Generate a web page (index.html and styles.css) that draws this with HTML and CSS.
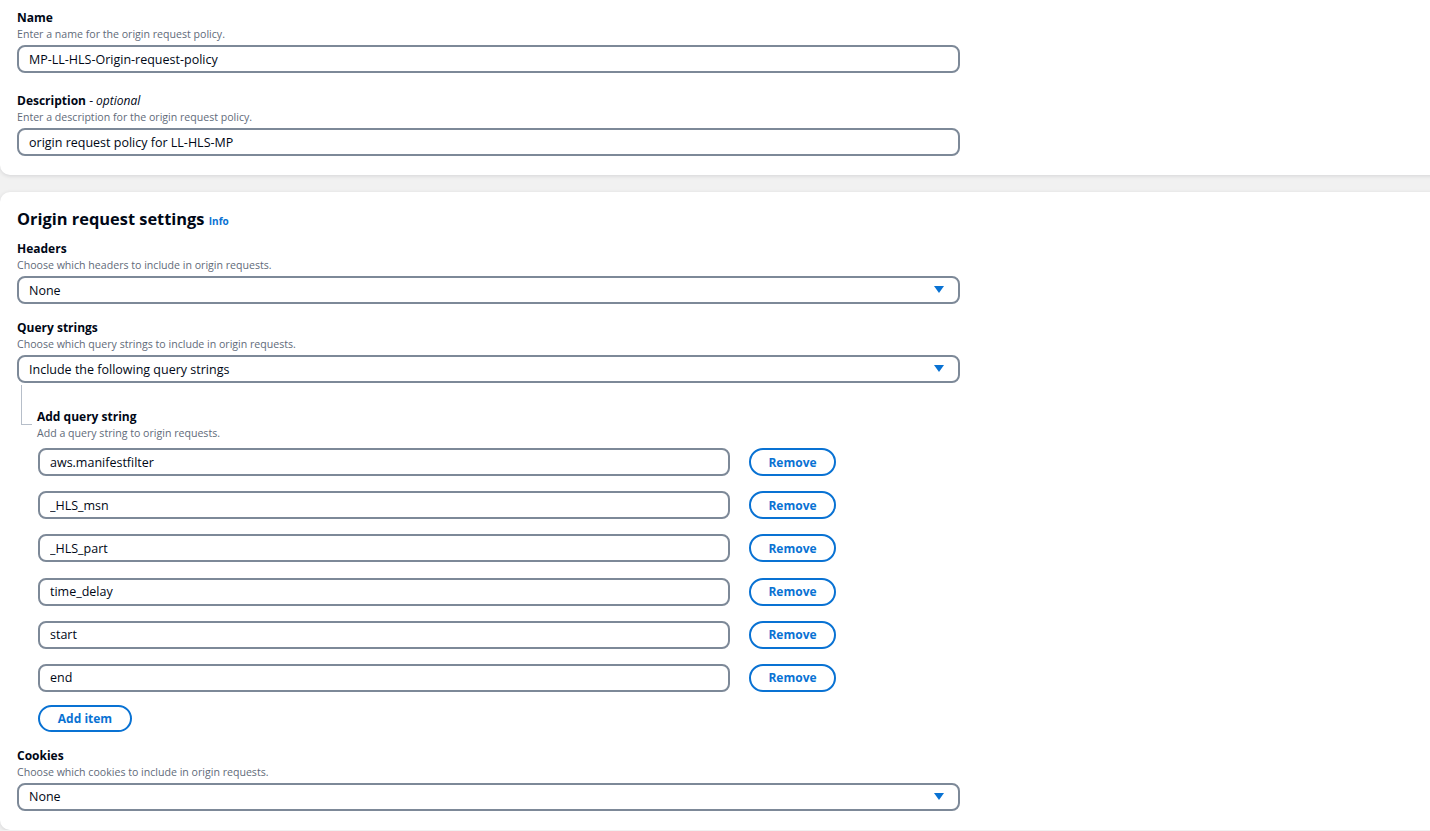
FILE: index.html
```html
<!DOCTYPE html>
<html lang="en">
<head>
  <meta charset="UTF-8">
  <title>Create origin request policy</title>
  <link rel="stylesheet" href="styles.css">
</head>
<body>
  <div class="card card-top">
    <div class="field">
      <label class="label">Name</label>
      <div class="hint">Enter a name for the origin request policy.</div>
      <input class="input" type="text" value="MP-LL-HLS-Origin-request-policy">
    </div>
    <div class="field">
      <label class="label">Description <span class="optional">- <i>optional</i></span></label>
      <div class="hint">Enter a description for the origin request policy.</div>
      <input class="input" type="text" value="origin request policy for LL-HLS-MP">
    </div>
  </div>

  <div class="card">
    <h2 class="heading">Origin request settings <a class="info" href="#">Info</a></h2>

    <div class="field">
      <label class="label">Headers</label>
      <div class="hint">Choose which headers to include in origin requests.</div>
      <div class="select">
        <span>None</span>
        <svg class="caret" width="10" height="8" viewBox="0 0 10 8"><path d="M0 0h10L5 7z" fill="#0972d3"/></svg>
      </div>
    </div>

    <div class="field">
      <label class="label">Query strings</label>
      <div class="hint">Choose which query strings to include in origin requests.</div>
      <div class="select">
        <span>Include the following query strings</span>
        <svg class="caret" width="10" height="8" viewBox="0 0 10 8"><path d="M0 0h10L5 7z" fill="#0972d3"/></svg>
      </div>

      <div class="nested">
        <div class="tree"></div>
        <div class="nested-body">
          <label class="label">Add query string</label>
          <div class="hint">Add a query string to origin requests.</div>
          <div class="items">
            <div class="item">
              <input class="input small" type="text" value="aws.manifestfilter">
              <button class="btn">Remove</button>
            </div>
            <div class="item">
              <input class="input small" type="text" value="_HLS_msn">
              <button class="btn">Remove</button>
            </div>
            <div class="item">
              <input class="input small" type="text" value="_HLS_part">
              <button class="btn">Remove</button>
            </div>
            <div class="item">
              <input class="input small" type="text" value="time_delay">
              <button class="btn">Remove</button>
            </div>
            <div class="item">
              <input class="input small" type="text" value="start">
              <button class="btn">Remove</button>
            </div>
            <div class="item">
              <input class="input small" type="text" value="end">
              <button class="btn">Remove</button>
            </div>
          </div>
          <button class="btn btn-add">Add item</button>
        </div>
      </div>
    </div>

    <div class="field">
      <label class="label">Cookies</label>
      <div class="hint">Choose which cookies to include in origin requests.</div>
      <div class="select">
        <span>None</span>
        <svg class="caret" width="10" height="8" viewBox="0 0 10 8"><path d="M0 0h10L5 7z" fill="#0972d3"/></svg>
      </div>
    </div>
  </div>
</body>
</html>
```

FILE: styles.css
```css
* {
  box-sizing: border-box;
}
body {
  font-family: 'Open Sans', 'Liberation Sans', sans-serif;
  margin: 0;
  background: #f1f1f1;
  color: #000716;
  overflow: hidden;
}
.card {
  background: #fff;
  margin-right: -20px;
  padding: 16px 20px 19px 17px;
  border-radius: 10px;
  box-shadow: 0 1px 4px rgba(0, 7, 22, 0.12);
  display: flex;
  flex-direction: column;
  gap: 20px;
}
.card + .card {
  margin-top: 17px;
  gap: 16px;
  padding-bottom: 19px;
}
.card-top {
  margin-top: -20px;
  padding-top: 30px;
  border-top-left-radius: 0;
}
.heading {
  margin: 0 0 -7px;
  font-size: 16.4px;
  line-height: 22px;
  font-weight: 700;
}
.info {
  font-size: 10px;
  color: #0972d3;
  text-decoration: none;
  font-weight: 700;
}
.field {
  display: flex;
  flex-direction: column;
}
.label {
  font-size: 12px;
  line-height: 16px;
  font-weight: 700;
}
.optional {
  font-weight: 400;
}
.hint {
  font-size: 10.6px;
  line-height: 14px;
  color: #5f6b7a;
  margin-top: 1px;
}
.input,
.select {
  margin-top: 4px;
  width: 943px;
  height: 28px;
  border: 2px solid #7d8998;
  border-radius: 8px;
  padding: 0 10px;
  font-family: inherit;
  font-size: 12.5px;
  color: #000716;
  background: #fff;
}
.select {
  display: flex;
  align-items: center;
  justify-content: space-between;
  padding-right: 14px;
}
.nested {
  display: flex;
  margin-top: 2px;
}
.tree {
  width: 11px;
  height: 40px;
  margin-left: 4px;
  border-left: 1px solid #b6bec9;
  border-bottom: 1px solid #b6bec9;
}
.nested-body {
  display: flex;
  flex-direction: column;
  padding-left: 5px;
  padding-top: 24px;
}
.items {
  display: flex;
  flex-direction: column;
  gap: 15.2px;
  margin-top: 8px;
}
.item {
  display: flex;
  align-items: center;
  gap: 19px;
}
.input.small {
  margin-top: 0;
  width: 692px;
  margin-left: 1px;
}
.btn {
  width: 87px;
  height: 28px;
  border: 2px solid #0972d3;
  border-radius: 20px;
  background: #fff;
  color: #0972d3;
  font-family: inherit;
  font-size: 12px;
  font-weight: 700;
  padding: 0;
}
.btn-add {
  width: 94px;
  height: 27px;
  margin-top: 13px;
  margin-left: 1px;
}
```
